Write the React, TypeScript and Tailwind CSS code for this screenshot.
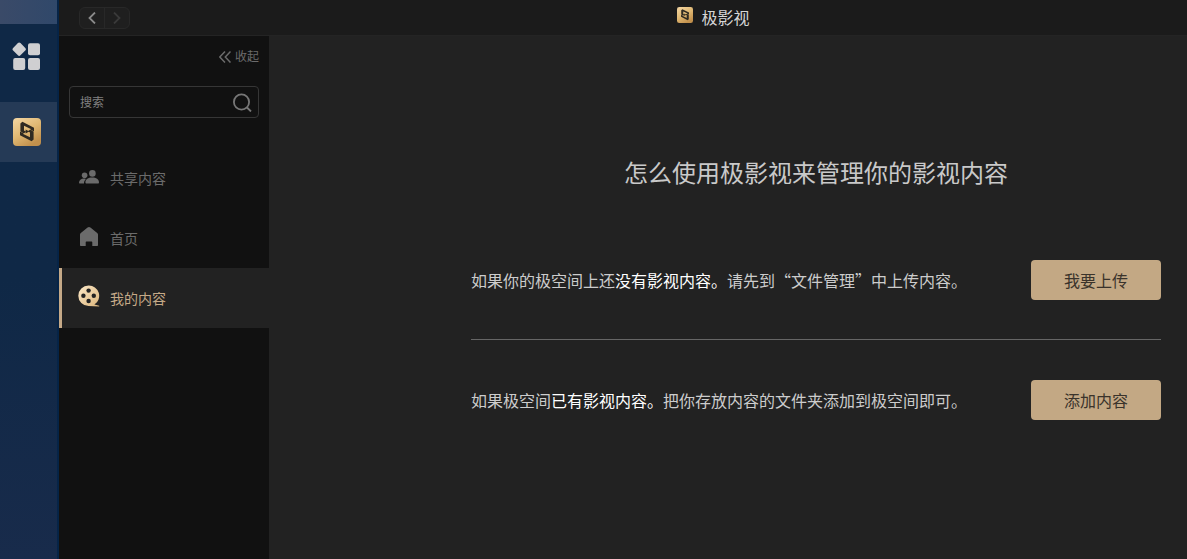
import { useState } from 'react';

type Section = 'shared' | 'home' | 'mine';

const sections: { id: Section; label: string }[] = [
  { id: 'shared', label: '共享内容' },
  { id: 'home', label: '首页' },
  { id: 'mine', label: '我的内容' },
];

function AppLogo({ id, className }: { id: string; className: string }) {
  return (
    <svg viewBox="0 0 28 28" className={className} aria-hidden="true">
      <defs>
        <linearGradient id={id} x1="0" y1="0" x2="0.6" y2="1">
          <stop offset="0" stopColor="#f3d6a4" />
          <stop offset="0.55" stopColor="#e0b873" />
          <stop offset="1" stopColor="#c2904c" />
        </linearGradient>
      </defs>
      <rect width="28" height="28" rx="4" fill={`url(#${id})`} />
      <g fill="#2f2a22">
        <path d="M9.400 3.800 21 9.800v3.600l-3.200-1.700v-.6L11 7.800v4.600l2.200 1.300-2.600 1.700-3.200-2.200V5.600z" />
        <path d="M18.600 23.200 7 17.200v-3.600l3.200 1.700v.6l6.800 3.300v-4.600l-2.200-1.300 2.600-1.700 3.200 2.200v7.600z" />
        <path d="m12.600 11.400 3.600 2.100-3.600 2.100z" />
      </g>
    </svg>
  );
}

function SectionIcon({ section }: { section: Section }) {
  if (section === 'shared') {
    return (
      <svg viewBox="0 0 20 20" className="size-5" fill="currentColor" aria-hidden="true">
        <circle cx="5.6" cy="7.2" r="2.8" />
        <circle cx="13.4" cy="5.4" r="3.3" />
        <path d="M0 14.800C0 12.200 2 10.600 5 10.600c.7 0 1.300.1 1.900.3-1.300 1.100-1.900 2.500-1.900 4.500H.6c-.4 0-.6-.2-.6-.6z" />
        <path d="M6.400 14.500c0-3 2.800-4.900 6.800-4.900s6.800 1.900 6.800 4.900c0 .6-.3.900-.8.900h-12c-.5 0-.8-.3-.8-.9z" />
      </svg>
    );
  }

  if (section === 'home') {
    return (
      <svg viewBox="0 0 20 20" className="mb-1 size-5" fill="currentColor" aria-hidden="true">
        <path d="M8.600 1.400c.8-.7 2-.7 2.800 0l6.800 5.700c.5.400.8.900.8 1.500v10.400c0 .6-.4 1-1 1h-4.700v-3.500c0-.6-.4-1-1-1H7.700c-.6 0-1 .4-1 1v3.500H2c-.6 0-1-.4-1-1V8.600c0-.6.3-1.100.8-1.500z" />
      </svg>
    );
  }

  return (
    <svg viewBox="0 0 22 22" className="-mx-px mb-1 size-[22px]" aria-hidden="true">
      <defs>
        <linearGradient id="reel" x1="0" y1="0" x2="1" y2="1">
          <stop offset="0" stopColor="#fbe8c8" />
          <stop offset="1" stopColor="#dcb67c" />
        </linearGradient>
      </defs>
      <path
        d="M10.600.5a10.300 10.300 0 1 0 0 20.600l10.600.5v-.9l-4.800-1.200A10.300 10.300 0 0 0 10.600.5z"
        fill="url(#reel)"
      />
      <g fill="#222222">
        <circle cx="10.600" cy="5.600" r="2.200" />
        <circle cx="5.400" cy="10.800" r="2.200" />
        <circle cx="15.800" cy="10.800" r="2.200" />
        <circle cx="10.600" cy="16" r="2.200" />
      </g>
    </svg>
  );
}

function Dock() {
  return (
    <aside className="flex w-[59px] shrink-0 flex-col border-r-2 border-[#062447] bg-linear-to-b from-[#0f2846] from-50% to-[#182b4b]">
      <div className="h-6 bg-linear-to-r from-[#3a4a68] to-[#30486a]" />
      <button aria-label="应用" className="flex h-16 items-center justify-center pr-1.5">
        <svg viewBox="0 0 28 28" className="size-7" fill="#cfcfd1" aria-hidden="true">
          <rect x="2" y="2" width="10.400" height="10.400" rx="1.800" transform="rotate(45 7.200 7.200)" />
          <rect x="16" y="1.300" width="12" height="12" rx="2" />
          <rect x="1.200" y="16" width="12" height="12" rx="2" />
          <rect x="16" y="16" width="12" height="12" rx="2" />
        </svg>
      </button>
      <button aria-label="极影视" className="mt-3.5 flex h-[60px] items-center justify-center bg-[#253a56] pr-1">
        <AppLogo id="dock-logo" className="size-7" />
      </button>
    </aside>
  );
}

function TitleBar() {
  return (
    <header className="flex h-9 items-center border-b border-[#242424] bg-[#1b1b1b] pl-5">
      <div className="flex h-[22px] w-[51px] rounded-md border border-[#282828] bg-[#1f1f1f]">
        <button aria-label="后退" className="flex flex-1 items-center justify-center border-r border-[#282828] text-[#8a8a8a]">
          <svg viewBox="0 0 8 12" className="h-3 w-2" fill="none" stroke="currentColor" strokeWidth="1.800" aria-hidden="true">
            <path d="M7 .5 1.500 6 7 11.500" />
          </svg>
        </button>
        <button aria-label="前进" disabled className="flex flex-1 items-center justify-center text-[#3a3a3a]">
          <svg viewBox="0 0 8 12" className="h-3 w-2" fill="none" stroke="currentColor" strokeWidth="1.800" aria-hidden="true">
            <path d="M1 .5 6.500 6 1 11.500" />
          </svg>
        </button>
      </div>
      <div className="flex flex-1 items-center justify-center gap-2 pb-0.5 pl-[110px]">
        <AppLogo id="title-logo" className="mb-1 size-4" />
        <h1 className="text-base leading-6 text-[#d6d6d6]">极影视</h1>
      </div>
    </header>
  );
}

function Sidebar({ active, onSelect }: { active: Section; onSelect: (section: Section) => void }) {
  const [query, setQuery] = useState('');

  return (
    <aside className="w-[210px] shrink-0 bg-[#111111]">
      <div className="flex h-[50px] items-start justify-end px-2.5 pt-3">
        <button className="flex items-center gap-1 text-xs leading-4 text-[#6b6b6b]">
          <svg viewBox="0 0 12 12" className="mt-0.5 size-3" fill="none" stroke="currentColor" strokeWidth="1.500" aria-hidden="true">
            <path d="M6 .5.800 6 6 11.500M11.500.5 6.300 6l5.200 5.500" />
          </svg>
          收起
        </button>
      </div>

      <div className="mx-2.5 flex h-8 items-center rounded-sm border border-[#363636] pr-1.5 pl-2.5">
        <input
          type="text"
          aria-label="搜索"
          placeholder="搜索"
          value={query}
          onChange={(e) => setQuery(e.target.value)}
          className="min-w-0 flex-1 bg-transparent text-xs text-[#cccccc] outline-none placeholder:text-[#808080]"
        />
        <button aria-label="搜索" className="text-[#777777]">
          <svg viewBox="0 0 20 20" className="size-5" fill="none" stroke="currentColor" strokeWidth="1.800" aria-hidden="true">
            <circle cx="9.500" cy="10" r="7.600" />
            <path d="m15 15.500 4 4" />
          </svg>
        </button>
      </div>

      <nav className="mt-[30px]">
        {sections.map(({ id, label }) => (
          <button
            key={id}
            onClick={() => onSelect(id)}
            className={`flex h-[60px] w-full items-center gap-[11px] border-l-[3px] pl-[17px] text-sm ${
              active === id
                ? 'border-[#c5a987] bg-[#222222] text-[#c5a987]'
                : 'border-transparent text-[#6b6b6b]'
            }`}
          >
            <SectionIcon section={id} />
            {label}
          </button>
        ))}
      </nav>
    </aside>
  );
}

const actionClass = 'h-10 w-[130px] shrink-0 rounded-sm bg-[#c3a884] text-base text-[#3a332b]';

function Guide() {
  return (
    <main className="min-w-0 flex-1 pt-[120px] pr-[26px] pl-[202px]">
      <h2 className="text-center text-2xl text-[#c9c9c9]">怎么使用极影视来管理你的影视内容</h2>

      <section className="mt-[72px] flex items-center justify-between border-b border-[#666666] pb-[39px] text-base text-[#cccccc]">
        <p>
          如果你的极空间上还<span className="text-white">没有影视内容。</span>请先到“文件管理”中上传内容。
        </p>
        <button className={actionClass}>我要上传</button>
      </section>

      <section className="flex items-center justify-between pt-10 text-base text-[#cccccc]">
        <p>
          如果极空间<span className="text-white">已有影视内容。</span>把你存放内容的文件夹添加到极空间即可。
        </p>
        <button className={actionClass}>添加内容</button>
      </section>
    </main>
  );
}

function App() {
  const [active, setActive] = useState<Section>('mine');

  return (
    <div
      lang="zh-CN"
      className="flex min-h-screen bg-[#222222] font-['Noto_Sans_CJK_SC',sans-serif]"
    >
      <Dock />
      <div className="flex min-w-0 flex-1 flex-col">
        <TitleBar />
        <div className="flex flex-1">
          <Sidebar active={active} onSelect={setActive} />
          <Guide />
        </div>
      </div>
    </div>
  );
}

export default App;
